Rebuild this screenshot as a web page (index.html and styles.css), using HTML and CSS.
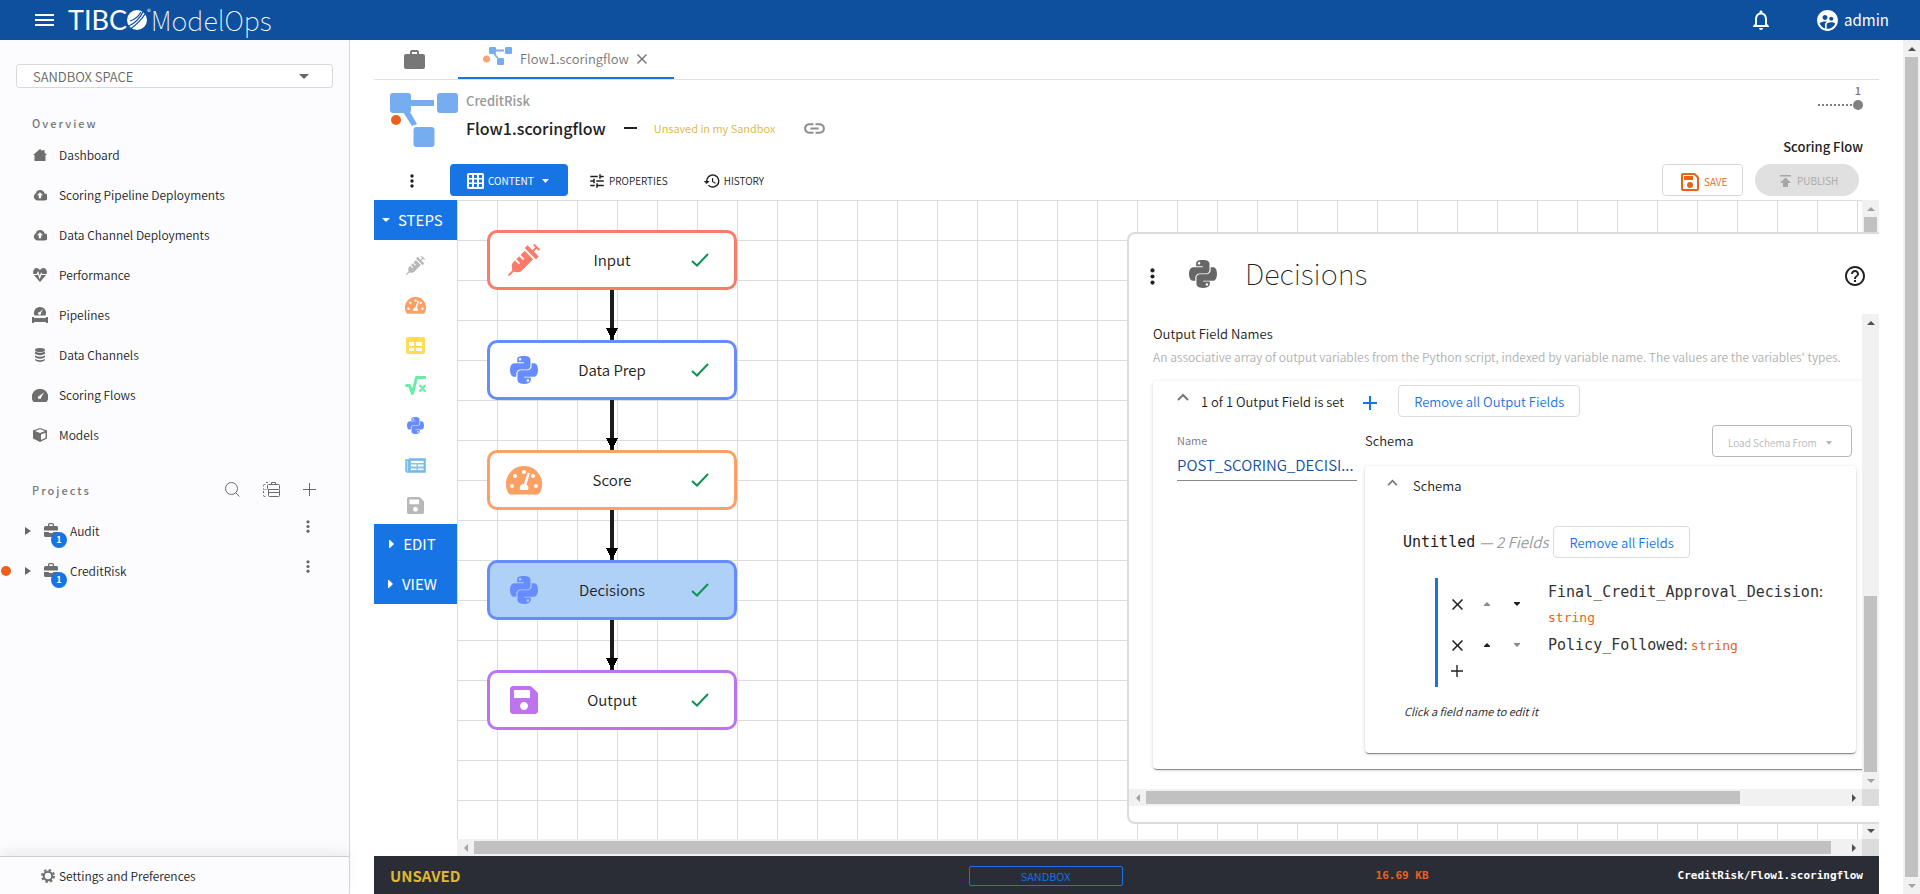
FILE: index.html
```html
<!DOCTYPE html>
<html lang="en">
<head>
<meta charset="utf-8">
<title>TIBCO ModelOps</title>
<link rel="stylesheet" href="styles.css">
</head>
<body>
<svg class="defs" aria-hidden="true">
  <symbol id="python" viewBox="0 32 448 448"><path d="M439.8 200.5c-7.7-30.9-22.3-54.2-53.4-54.2h-40.1v47.4c0 36.8-31.2 67.8-66.8 67.8H172.7c-29.2 0-53.4 25-53.4 54.3v101.8c0 29 25.2 46 53.4 54.3 33.8 9.9 66.3 11.7 106.8 0 26.9-7.8 53.4-23.5 53.4-54.3v-40.7H226.2v-13.6h160.2c31.1 0 42.6-21.7 53.4-54.2 11.2-33.5 10.7-65.7 0-108.6zM286.2 404c11.1 0 20.1 9.1 20.1 20.3 0 11.3-9 20.4-20.1 20.4-11 0-20.1-9.2-20.1-20.4.1-11.3 9.1-20.3 20.1-20.3zM167.8 248.1h106.8c29.7 0 53.4-24.5 53.4-54.3V91.9c0-29-24.4-50.7-53.4-55.6-35.8-5.9-74.7-5.6-106.8.1-45.2 8-53.4 24.7-53.4 55.6v40.7h106.9v13.6h-147c-31.1 0-58.3 18.7-66.8 54.2-9.8 40.7-10.2 66.1 0 108.6 7.6 31.6 25.7 54.2 56.8 54.2H101v-48.8c0-35.3 30.5-66.4 66.8-66.4zm-6.7-142.6c-11.1 0-20.1-9.1-20.1-20.3.1-11.3 9-20.4 20.1-20.4 11 0 20.1 9.2 20.1 20.4s-9 20.3-20.1 20.3z"/></symbol>
  <symbol id="syringe" viewBox="0 0 512 512"><path d="M201.5 174.8l55.7 55.8c3.1 3.1 3.1 8.2 0 11.3l-11.3 11.3c-3.1 3.1-8.2 3.1-11.3 0l-55.7-55.8-45.3 45.3 55.8 55.8c3.1 3.1 3.1 8.2 0 11.3l-11.3 11.3c-3.1 3.1-8.2 3.1-11.3 0L111 265.2l-26.4 26.4c-17.3 17.3-25.6 41.1-23 65.4l7.1 63.6L2.3 487c-3.1 3.1-3.1 8.2 0 11.3l11.3 11.3c3.1 3.1 8.2 3.1 11.3 0l66.3-66.3 63.6 7.1c23.9 2.6 47.9-5.4 65.4-23l181.9-181.9-135.7-135.7-64.9 65zm308.2-93.3L430.5 2.3c-3.1-3.1-8.2-3.1-11.3 0l-11.3 11.3c-3.1 3.1-3.1 8.2 0 11.3l28.3 28.3-45.3 45.3-56.6-56.6-17-17c-3.1-3.1-8.2-3.1-11.3 0l-33.9 33.9c-3.1 3.1-3.1 8.2 0 11.3l17 17L424.8 223l17 17c3.1 3.1 8.2 3.1 11.3 0l33.9-34c3.1-3.1 3.1-8.2 0-11.3l-73.5-73.5 45.3-45.3 28.3 28.3c3.1 3.1 8.2 3.1 11.3 0l11.3-11.3c3.1-3.2 3.1-8.2 0-11.4z"/></symbol>
  <symbol id="gauge" viewBox="0 0 36 29"><path d="M18 0a18 18 0 0 0-15.5 27.2A3 3 0 0 0 5 28.500h26a3 3 0 0 0 2.500-1.300A18 18 0 0 0 18 0z"/><g fill="#fff"><circle cx="18" cy="6" r="2"/><circle cx="9" cy="10" r="2"/><circle cx="27" cy="10" r="2"/><circle cx="6" cy="20" r="2"/><circle cx="30" cy="20" r="2"/><path d="M21.600 6.500l2.300.8-3.400 11.400a4 4 0 0 1 1.300 5.300h-7.600a4 4 0 0 1 3.700-6z"/></g></symbol>
  <symbol id="table" viewBox="0 0 19 17"><path fill-rule="evenodd" d="M2 0h15a2 2 0 0 1 2 2v13a2 2 0 0 1-2 2H2a2 2 0 0 1-2-2V2a2 2 0 0 1 2-2zM3 5v4h5V5zm7 0v4h6V5zM3 11v3h5v-3zm7 0v3h6v-3z"/></symbol>
  <symbol id="root" viewBox="0 0 21 19"><path d="M1.500 9.500h3l3 8 4-16H20" fill="none" stroke="currentColor" stroke-width="3" stroke-linecap="round" stroke-linejoin="round"/><path d="M15 9.500l5 5.500M20 9.500L15 15" fill="none" stroke="currentColor" stroke-width="2" stroke-linecap="round"/></symbol>
  <symbol id="news" viewBox="0 0 21 15"><path fill="none" stroke="currentColor" stroke-width="1.500" d="M4 1h16v13H2.500Q1 14 1 12.500V2h3v11"/><path d="M4 1h16v13H3z" opacity=".85"/><path d="M1 2h3v11H1z" opacity=".5"/><path fill="#fff" d="M6 3h12.500v2H6zM6 6.500h5.500v2H6zM13 6.500h5.500v2H13zM6 10.500h5.500v1.500H6zM13 10.500h5.500v1.500H13z"/></symbol>
  <symbol id="disk" viewBox="0 32 448 448"><path d="M433.941 129.941l-83.882-83.882A48 48 0 0 0 316.118 32H48C21.490 32 0 53.490 0 80v352c0 26.510 21.490 48 48 48h352c26.510 0 48-21.490 48-48V163.882a48 48 0 0 0-14.059-33.941zM224 416c-35.346 0-64-28.654-64-64 0-35.346 28.654-64 64-64s64 28.654 64 64c0 35.346-28.654 64-64 64zm96-304.520V212c0 6.627-5.373 12-12 12H76c-6.627 0-12-5.373-12-12V108c0-6.627 5.373-12 12-12h228.520c3.183 0 6.235 1.264 8.485 3.515l3.480 3.480A11.996 11.996 0 0 1 320 111.480z"/></symbol>
  <symbol id="dots" viewBox="0 0 4 14"><circle cx="2" cy="2" r="1.700"/><circle cx="2" cy="7" r="1.700"/><circle cx="2" cy="12" r="1.700"/></symbol>
  <symbol id="caret" viewBox="0 0 10 5"><path d="M0 0h10L5 5z"/></symbol>
  <symbol id="close" viewBox="5 5 14 14"><path d="M19 6.410L17.590 5 12 10.590 6.410 5 5 6.410 10.590 12 5 17.590 6.410 19 12 13.410 17.590 19 19 17.590 13.410 12z"/></symbol>
  <symbol id="check" viewBox="0 0 18 14"><path d="M1 8l5 4.500L17 1" fill="none" stroke="currentColor" stroke-width="2"/></symbol>
  <symbol id="chevron" viewBox="0 0 12 8"><path d="M1 7l5-5 5 5" fill="none" stroke="currentColor" stroke-width="2"/></symbol>
  <symbol id="plus" viewBox="0 0 14 14"><path d="M7 0v14M0 7h14" fill="none" stroke="currentColor" stroke-width="2"/></symbol>
  <symbol id="plusthin" viewBox="0 0 14 14"><path d="M7 0v14M0 7h14" fill="none" stroke="currentColor" stroke-width="1.600"/></symbol>
  <symbol id="cloud" viewBox="0 0 14 12"><path d="M11.500 4.500A4.500 4.500 0 0 0 2.800 4.200 4 4 0 0 0 3.800 11.500h7.200a3.500 3.500 0 0 0 .5-7z"/><path fill="#fff" d="M7 3.200l3 3H8.200v3H5.800v-3H4z"/></symbol>
  <symbol id="case" viewBox="0 0 14 14"><path fill-rule="evenodd" d="M4 3V1.500A1.500 1.500 0 0 1 5.500 0h3A1.500 1.500 0 0 1 10 1.500V3h2.500A1.500 1.500 0 0 1 14 4.500V7.500H0V4.500A1.500 1.500 0 0 1 1.500 3zm1.300 0h3.400V1.300H5.300zM0 9h5v1h4V9h5v3.500A1.500 1.500 0 0 1 12.500 14h-11A1.500 1.500 0 0 1 0 12.500z"/></symbol>
</svg>

<header class="topbar">
  <button class="icon-btn" aria-label="Menu"><svg width="19" height="12" viewBox="0 0 19 12"><path d="M0 1h19M0 6h19M0 11h19" stroke="#fff" stroke-width="2"/></svg></button>
  <a class="brand" href="#"><span class="brand-name">TIBC</span><svg width="20" height="20" viewBox="0 0 20 20"><circle cx="10" cy="10" r="10" fill="#fff"/><path d="M1 16.500Q11 12 16 2M4 18.500Q13 12 18 4M3 11Q10 9 14 2" fill="none" stroke="#0f509e" stroke-width="1.300"/></svg><span class="reg">®</span><span class="product">ModelOps</span></a>
  <div class="topbar-right">
    <button class="icon-btn" aria-label="Notifications"><svg width="24" height="24" viewBox="0 0 24 24"><path d="M12 22c1.100 0 2-.9 2-2h-4c0 1.100.9 2 2 2zm6-6v-5c0-3.070-1.630-5.640-4.500-6.320V4c0-.83-.67-1.500-1.500-1.500s-1.500.67-1.500 1.500v.68C7.640 5.360 6 7.920 6 11v5l-2 2v1h16v-1l-2-2zm-2 1H8v-6c0-2.480 1.510-4.500 4-4.500s4 2.020 4 4.500v6z"/></svg></button>
    <button class="user"><svg width="25" height="25" viewBox="0 0 24 24"><path d="M11.990 2c-5.520 0-10 4.480-10 10s4.480 10 10 10 10-4.480 10-10-4.480-10-10-10zm3.610 6.340c1.070 0 1.930.86 1.930 1.930 0 1.070-.86 1.930-1.930 1.930-1.070 0-1.930-.86-1.930-1.930-.01-1.070.86-1.930 1.930-1.930zm-6-1.580c1.300 0 2.360 1.060 2.360 2.360 0 1.300-1.060 2.360-2.360 2.360s-2.360-1.060-2.360-2.360c0-1.310 1.050-2.360 2.360-2.360zm0 9.130v3.750c-2.400-.75-4.300-2.600-5.140-4.960 1.050-1.120 3.670-1.690 5.140-1.690.53 0 1.200.08 1.900.22-1.640.87-1.900 2.020-1.900 2.680zM11.990 20c-.27 0-.53-.01-.79-.04v-4.070c0-1.420 2.940-2.130 4.400-2.130 1.070 0 2.920.39 3.840 1.150-1.170 2.970-4.060 5.090-7.450 5.090z"/></svg>admin</button>
  </div>
</header>

<div class="shell">
  <aside class="sidebar">
    <div class="side-scroll">
      <div class="space-pick"><select aria-label="Space"><option>SANDBOX SPACE</option></select><svg width="10" height="5"><use href="#caret"/></svg></div>
      <h2 class="side-title">Overview</h2>
      <nav class="nav">
        <a href="#"><span class="ico"><svg width="14" height="12" viewBox="0 0 14 12"><path d="M7 0l2.500 2V1h2v2.500L14 6h-1.500v6h-11V6H0z"/></svg></span>Dashboard</a>
        <a href="#"><span class="ico"><svg width="14" height="12"><use href="#cloud"/></svg></span>Scoring Pipeline Deployments</a>
        <a href="#"><span class="ico"><svg width="14" height="12"><use href="#cloud"/></svg></span>Data Channel Deployments</a>
        <a href="#"><span class="ico"><svg width="14" height="14" viewBox="0 0 14 14"><path d="M7 2Q3.500-1.500 1 1.500-.6 3.500.5 6.500L7 14l6.500-7.500q1.100-3-.5-5Q10.500-1.500 7 2z"/><path d="M0 6.500h4l1-2 1.700 5 1.600-4 .7 1h5" fill="none" stroke="#fff" stroke-width="1.200"/></svg></span>Performance</a>
        <a href="#"><span class="ico"><svg width="16" height="16" viewBox="0 0 16 16"><path d="M8 0a6 6 0 0 0-5.500 8.500h11A6 6 0 0 0 8 0zM0 10h2v1h12v-1h2v6h-2v-1H2v1H0z"/><path d="M7 6l4-4-2.500 5z" fill="#fff"/><circle cx="7.500" cy="6.500" r="1.400" fill="#fff"/></svg></span>Pipelines</a>
        <a href="#"><span class="ico"><svg width="10" height="14" viewBox="0 0 10 14"><ellipse cx="5" cy="2" rx="5" ry="2"/><path d="M0 3.500q5 2.500 10 0v2.200q-5 3-10 0zM0 7.500q5 2.500 10 0v1.700q-5 3-10 0zM0 11q5 2.500 10 0v1.200q-5 3.600-10 0z"/></svg></span>Data Channels</a>
        <a href="#"><span class="ico"><svg width="16" height="13" viewBox="0 0 16 13"><path d="M8 0A8 8 0 0 0 1.500 13h13A8 8 0 0 0 8 0z"/><path d="M6.500 7.500L12 3.500l-3.500 6z" fill="#fff"/><circle cx="7.500" cy="8.500" r="1.600" fill="#fff"/></svg></span>Scoring Flows</a>
        <a href="#"><span class="ico"><svg width="14" height="14" viewBox="0 0 14 14"><path d="M7 0l7 2.500v8L7 14l-7-3.500v-8z"/><path d="M2 3l5 2 5-2-5-1.800zM8 6.500l4.500-1.800V9.700L8 12z" fill="#fff"/></svg></span>Models</a>
      </nav>
      <div class="projects-head">
        <h2 class="side-title">Projects</h2>
        <button class="icon-btn" aria-label="Search"><svg width="15" height="15" viewBox="0 0 15 15" fill="none" stroke="#6b6b6b"><circle cx="6.500" cy="6.500" r="6"/><path d="M10.700 10.700L14.500 14.500"/></svg></button>
        <button class="icon-btn" aria-label="Archived projects"><svg width="17" height="15" viewBox="0 0 17 15" fill="none" stroke="#6b6b6b"><rect x="4.500" y="2.500" width="12" height="5" rx="1"/><path d="M8.500 2.500v-2h4v2M5.500 7.500v6q0 1 1 1h9q1 0 1-1v-6M5.500 10.500h11M2.500 2.500h-1q-1 0-1 1v1m0 2v1h1m1 0h1M.5 9v2m0 2v.5q0 1 1 1h1m.5-14h2"/></svg></button>
        <button class="icon-btn" aria-label="Add project"><svg width="13" height="13" viewBox="0 0 13 13"><path d="M6.500 0v13M0 6.500h13" stroke="#6b6b6b"/></svg></button>
      </div>
      <div class="project"><i class="mark"></i><svg class="tri" width="6" height="8" viewBox="0 0 6 8"><path d="M0 0l6 4-6 4z"/></svg><span class="proj-ico"><svg width="14" height="14"><use href="#case"/></svg><b class="badge">1</b></span><a href="#">Audit</a><button class="icon-btn" aria-label="Audit menu"><svg width="4" height="13"><use href="#dots"/></svg></button></div>
      <div class="project"><i class="mark on"></i><svg class="tri" width="6" height="8" viewBox="0 0 6 8"><path d="M0 0l6 4-6 4z"/></svg><span class="proj-ico"><svg width="14" height="14"><use href="#case"/></svg><b class="badge">1</b></span><a href="#">CreditRisk</a><button class="icon-btn" aria-label="CreditRisk menu"><svg width="4" height="13"><use href="#dots"/></svg></button></div>
    </div>
    <a class="settings" href="#"><svg width="14" height="14" viewBox="0 0 14 14"><circle cx="7" cy="7" r="4.200" fill="none" stroke="#6e6e6e" stroke-width="2"/><circle cx="7" cy="7" r="6" fill="none" stroke="#6e6e6e" stroke-width="2" stroke-dasharray="2.400 2.310"/></svg>Settings and Preferences</a>
  </aside>

  <main class="main">
    <div class="tabs">
      <button class="tab home" aria-label="Projects"><svg width="21" height="19" viewBox="0 0 21 19"><path fill-rule="evenodd" d="M6 4V2a2 2 0 0 1 2-2h5a2 2 0 0 1 2 2v2h4a2 2 0 0 1 2 2v11a2 2 0 0 1-2 2H2a2 2 0 0 1-2-2V6a2 2 0 0 1 2-2zm2 0h5V2H8z"/></svg></button>
      <div class="tab file">
        <svg width="29" height="18" viewBox="0 0 29 18" fill="#76acf0"><rect x="6" width="7" height="7" rx="1"/><rect x="22" width="7" height="7" rx="1"/><rect x="14" y="11" width="7" height="7" rx="1"/><path d="M13 2.500h8v2h-8zM10.500 7h2l3 4h-2z"/><circle cx="3.500" cy="12" r="3.500" fill="#f5a47c"/></svg>
        <span>Flow1.scoringflow</span>
        <button class="icon-btn" aria-label="Close tab"><svg width="10" height="10" fill="#777"><use href="#close"/></svg></button>
      </div>
    </div>

    <section class="doc-head">
      <svg class="doc-logo" width="68" height="54" viewBox="0 0 68 54" fill="#76acf0"><rect width="21" height="20" rx="3"/><rect x="47" width="21" height="20" rx="3"/><rect x="23.500" y="34" width="21" height="20" rx="3"/><path d="M20 7h24v6H20zM13 19h7l7 12-5 2z"/><circle cx="6" cy="27" r="5" fill="#ed5f1d"/></svg>
      <div class="doc-titles">
        <div class="doc-project">CreditRisk</div>
        <div class="doc-line"><h1>Flow1.scoringflow</h1><i class="dash"></i><span class="unsaved">Unsaved in my Sandbox</span><svg width="25" height="25" viewBox="0 0 24 24" fill="#8f8f8f"><path d="M3.900 12c0-1.710 1.390-3.100 3.100-3.100h4V7H7c-2.760 0-5 2.240-5 5s2.240 5 5 5h4v-1.900H7c-1.710 0-3.100-1.390-3.100-3.100zM8 13h8v-2H8v2zm9-6h-4v1.900h4c1.710 0 3.100 1.390 3.100 3.100s-1.390 3.100-3.100 3.100h-4V17h4c2.760 0 5-2.240 5-5s-2.240-5-5-5z"/></svg></div>
      </div>
      <div class="doc-side">
        <div class="revision"><span>1</span><svg width="45" height="10" viewBox="0 0 45 10"><path d="M0 5h35" stroke="#808080" stroke-width="2" stroke-dasharray="2 2"/><circle cx="40" cy="5" r="5" fill="#808080"/></svg></div>
        <strong>Scoring Flow</strong>
      </div>
    </section>

    <div class="toolbar">
      <button class="icon-btn more" aria-label="More"><svg width="4" height="14"><use href="#dots"/></svg></button>
      <button class="btn primary"><svg width="17" height="16" viewBox="0 0 17 16"><path fill-rule="evenodd" d="M1.500 0h14A1.500 1.500 0 0 1 17 1.500v13a1.500 1.500 0 0 1-1.500 1.500h-14A1.500 1.500 0 0 1 0 14.500v-13A1.500 1.500 0 0 1 1.500 0zM2 2v3h3V2zm5 0v3h3V2zm5 0v3h3V2zM2 6.500v3h3v-3zm5 0v3h3v-3zm5 0v3h3v-3zM2 11v3h3v-3zm5 0v3h3v-3zm5 0v3h3v-3z"/></svg>CONTENT<svg class="gap" width="7" height="4" viewBox="0 0 10 5" preserveAspectRatio="none"><path d="M0 0h10L5 5z"/></svg></button>
      <button class="btn flat"><svg width="18" height="18" viewBox="0 0 24 24"><path d="M3 17v2h6v-2H3zM3 5v2h10V5H3zm10 16v-2h8v-2h-8v-2h-2v6h2zM7 9v2H3v2h4v2h2V9H7zm14 4v-2H11v2h10zm-6-4h2V7h4V5h-4V3h-2v6z"/></svg>PROPERTIES</button>
      <button class="btn flat"><svg width="18" height="18" viewBox="0 0 24 24"><path d="M13 3a9 9 0 0 0-9 9H1l3.890 3.890.07.14L9 12H6c0-3.870 3.130-7 7-7s7 3.130 7 7-3.130 7-7 7c-1.930 0-3.680-.79-4.940-2.060l-1.420 1.420A8.954 8.954 0 0 0 13 21a9 9 0 0 0 0-18zm-1 5v5l4.280 2.540.72-1.210-3.500-2.080V8H12z"/></svg>HISTORY</button>
      <div class="toolbar-end">
        <button class="btn save"><svg width="18" height="18" viewBox="0 0 18 18"><path fill="none" stroke="currentColor" stroke-width="2" d="M2 1h11.500L17 4.500V16q0 1-1 1H2q-1 0-1-1V2q0-1 1-1z"/><path d="M3 3h9v4H3z"/><circle cx="9" cy="12" r="3"/></svg>SAVE</button>
        <button class="btn publish" disabled><svg width="11" height="12" viewBox="0 0 11 12"><path d="M0 0h11v1.500H0zM5.500 2.500L11 8H8v4H3V8H0z"/></svg>PUBLISH</button>
      </div>
    </div>

    <div class="work">
      <div class="palette">
        <button class="group open"><svg width="8" height="4" viewBox="0 0 10 5" preserveAspectRatio="none"><path d="M0 0h10L5 5z"/></svg>STEPS</button>
        <div class="tools">
          <button class="tool t-grey" aria-label="Input"><svg width="19" height="19"><use href="#syringe"/></svg></button>
          <button class="tool t-orange" aria-label="Score"><svg width="21" height="17"><use href="#gauge"/></svg></button>
          <button class="tool t-yellow" aria-label="Table"><svg width="19" height="17"><use href="#table"/></svg></button>
          <button class="tool t-green" aria-label="Formula"><svg width="21" height="19"><use href="#root"/></svg></button>
          <button class="tool t-blue" aria-label="Python"><svg width="17" height="17"><use href="#python"/></svg></button>
          <button class="tool t-sky" aria-label="Report"><svg width="21" height="15"><use href="#news"/></svg></button>
          <button class="tool t-grey" aria-label="Output"><svg width="17" height="17"><use href="#disk"/></svg></button>
        </div>
        <button class="group"><svg width="5" height="8" viewBox="0 0 5 8"><path d="M0 0h1l4 4-4 4H0z"/></svg>EDIT</button>
        <button class="group"><svg width="5" height="8" viewBox="0 0 5 8"><path d="M0 0h1l4 4-4 4H0z"/></svg>VIEW</button>
      </div>

      <div class="canvas-frame">
        <div class="canvas">
          <div class="node n-red"><svg width="32" height="32"><use href="#syringe"/></svg><span>Input</span><svg class="ok" width="18" height="14"><use href="#check"/></svg></div>
          <div class="link"></div>
          <div class="node n-blue"><svg width="28" height="28"><use href="#python"/></svg><span>Data Prep</span><svg class="ok" width="18" height="14"><use href="#check"/></svg></div>
          <div class="link"></div>
          <div class="node n-orange"><svg width="36" height="29"><use href="#gauge"/></svg><span>Score</span><svg class="ok" width="18" height="14"><use href="#check"/></svg></div>
          <div class="link"></div>
          <div class="node n-blue selected"><svg width="28" height="28"><use href="#python"/></svg><span>Decisions</span><svg class="ok" width="18" height="14"><use href="#check"/></svg></div>
          <div class="link"></div>
          <div class="node n-purple"><svg width="28" height="28"><use href="#disk"/></svg><span>Output</span><svg class="ok" width="18" height="14"><use href="#check"/></svg></div>
        </div>
        <div class="sb v"><i class="a up dim"></i><div class="track"><i class="thumb w99"></i></div><i class="a down"></i></div>
        <div class="sb h"><i class="a left dim"></i><div class="track"><i class="thumb w99"></i></div><i class="a right"></i></div>
        <div class="corner"></div>

        <section class="panel">
          <header class="panel-head">
            <button class="icon-btn" aria-label="Step menu"><svg width="5" height="17"><use href="#dots"/></svg></button>
            <svg width="28" height="28" fill="#666"><use href="#python"/></svg>
            <h2>Decisions</h2>
            <button class="icon-btn help" aria-label="Help"><svg width="24" height="24" viewBox="0 0 24 24"><path d="M11 18h2v-2h-2v2zm1-16C6.480 2 2 6.480 2 12s4.480 10 10 10 10-4.480 10-10S17.520 2 12 2zm0 18c-4.410 0-8-3.590-8-8s3.590-8 8-8 8 3.590 8 8-3.590 8-8 8zm0-14c-2.210 0-4 1.790-4 4h2c0-1.100.9-2 2-2s2 .9 2 2c0 2-3 1.750-3 5h2c0-2.250 3-2.500 3-5 0-2.210-1.790-4-4-4z"/></svg></button>
          </header>
          <div class="panel-frame">
            <div class="panel-body">
              <h3>Output Field Names</h3>
              <p class="hint">An associative array of output variables from the Python script, indexed by variable name. The values are the variables' types.</p>
              <div class="card outer">
                <div class="card-top"><button class="icon-btn chev" aria-label="Collapse"><svg width="12" height="8"><use href="#chevron"/></svg></button><span>1 of 1 Output Field is set</span><button class="icon-btn add" aria-label="Add output field"><svg width="14" height="14"><use href="#plus"/></svg></button><button class="outline">Remove all Output Fields</button></div>
                <div class="fields">
                  <div class="name-field"><label for="fname">Name</label><input id="fname" value="POST_SCORING_DECISI..."></div>
                  <div class="schema">
                    <div class="schema-top"><span>Schema</span><button class="load" disabled>Load Schema From<svg width="6" height="4" viewBox="0 0 10 5" preserveAspectRatio="none"><path d="M0 0h10L5 5z"/></svg></button></div>
                    <div class="card inner">
                      <div class="inner-top"><button class="icon-btn chev" aria-label="Collapse schema"><svg width="11" height="7"><use href="#chevron"/></svg></button><span>Schema</span></div>
                      <div class="untitled"><code>Untitled</code><em>— 2 Fields</em><button class="outline">Remove all Fields</button></div>
                      <div class="rows">
                        <div class="row tall"><button class="icon-btn" aria-label="Remove"><svg width="11" height="11"><use href="#close"/></svg></button><button class="icon-btn off" aria-label="Move up"><svg width="6" height="4" viewBox="0 0 6 4"><path d="M3 0l3 3v1H0V3z"/></svg></button><button class="icon-btn" aria-label="Move down"><svg width="6" height="4" viewBox="0 0 6 4"><path d="M3 4l3-3V0H0v1z"/></svg></button><div class="def"><code>Final_Credit_Approval_Decision</code>: <code class="type">string</code></div></div>
                        <div class="row"><button class="icon-btn" aria-label="Remove"><svg width="11" height="11"><use href="#close"/></svg></button><button class="icon-btn" aria-label="Move up"><svg width="6" height="4" viewBox="0 0 6 4"><path d="M3 0l3 3v1H0V3z"/></svg></button><button class="icon-btn off" aria-label="Move down"><svg width="6" height="4" viewBox="0 0 6 4"><path d="M3 4l3-3V0H0v1z"/></svg></button><div class="def"><code>Policy_Followed</code>: <code class="type">string</code></div></div>
                        <div class="row last"><button class="icon-btn" aria-label="Add field"><svg width="12" height="12"><use href="#plusthin"/></svg></button></div>
                      </div>
                      <p class="note">Click a field name to edit it</p>
                    </div>
                  </div>
                </div>
              </div>
            </div>
            <div class="sb v"><i class="a up"></i><div class="track end"><i class="thumb w40"></i></div><i class="a down dim"></i></div>
            <div class="sb h"><i class="a left dim"></i><div class="track"><i class="thumb w85"></i></div><i class="a right"></i></div>
            <div class="corner"></div>
          </div>
        </section>
      </div>
    </div>

    <footer class="status">
      <b class="state">UNSAVED</b>
      <button class="env">SANDBOX</button>
      <code class="size">16.69 KB</code>
      <code class="path">CreditRisk/Flow1.scoringflow</code>
    </footer>
  </main>
  <div class="sb v page"><i class="a up"></i><div class="track"><i class="thumb full"></i></div><i class="a down dim"></i></div>
</div>
</body>
</html>
```
FILE: styles.css
```css
:root {
  --sans: "Noto Sans CJK SC", "Noto Sans", sans-serif;
  --mono: "DejaVu Sans Mono", monospace;
  --blue: #1774e5;
  --ink: #212121;
  --grey: #6e6e6e;
  --line: #dcdcdc;
}
* { box-sizing: border-box; }
body {
  margin: 0;
  height: 100vh;
  overflow: hidden;
  display: flex;
  flex-direction: column;
  background: #fff;
  color: var(--ink);
  font: 350 13px/20px var(--sans);
}
button, input, select { font: inherit; color: inherit; margin: 0; }
button { border: 0; background: none; padding: 0; cursor: pointer; }
a { color: inherit; text-decoration: none; }
h1, h2, h3, p { margin: 0; font-weight: 400; }
h3 { font-size: 13px; font-weight: 350; }
code { font-family: var(--mono); font-size: 15px; }
svg { display: block; flex: none; }
svg:not([fill]) { fill: currentColor; }
.defs { position: absolute; width: 0; height: 0; }
.icon-btn { display: flex; align-items: center; justify-content: center; }

/* top bar */
.topbar {
  flex: none;
  height: 40px;
  display: flex;
  align-items: center;
  padding: 0 31px 0 35px;
  background: #0f509e;
  color: #fff;
}
.brand { display: flex; align-items: center; margin-left: 14px; line-height: 40px; }
.brand-name { font-family: Lato, sans-serif; font-size: 27px; font-weight: 400; }
.brand .reg { align-self: flex-start; font-size: 8px; line-height: 24px; }
.brand .product { font-size: 27px; font-weight: 100; line-height: 36px; }
.topbar-right { margin-left: auto; display: flex; align-items: center; gap: 42px; }
.user { display: flex; align-items: center; gap: 4px; font-size: 15px; font-weight: 400; }

/* shell */
.shell { flex: 1; min-height: 0; display: flex; }
.sidebar {
  width: 350px;
  flex: none;
  display: flex;
  flex-direction: column;
  background: #fcfcff;
  border-right: 1px solid #d8d8d8;
  font-size: 12px;
}
.side-scroll { flex: 1; padding-top: 24px; color: #222; }
.space-pick { display: grid; align-items: center; margin: 0 16px; }
.space-pick > * { grid-area: 1 / 1; }
.space-pick svg { justify-self: end; margin-right: 24px; color: #666; pointer-events: none; }
.space-pick select {
  appearance: none;
  width: 100%;
  height: 24px;
  padding: 2px 16px 0;
  border: 1px solid #d8d8d8;
  border-radius: 3px;
  background: #fff;
  color: #666;
  font-size: 13px;
  line-height: 20px;
}
.side-title { font-size: 11px; font-weight: 500; line-height: 16px; letter-spacing: 2px; color: #777; padding-left: 32px; }
.space-pick + .side-title { margin-top: 27px; }
.nav { margin-top: 4px; }
.nav a { display: flex; align-items: center; height: 40px; padding-left: 30px; gap: 9px; }
.ico { width: 20px; display: flex; justify-content: center; color: var(--grey); }
.projects-head { display: flex; align-items: center; height: 20px; margin: 24px 33px 12px 0; gap: 23px; }
.projects-head .side-title { flex: 1; padding-top: 2px; }
.project { display: flex; align-items: center; height: 40px; padding-right: 39px; }
.project .icon-btn { margin-left: auto; margin-bottom: 10px; color: #666; }
.mark { width: 10px; height: 10px; margin: 0 14px 0 1px; border-radius: 50%; }
.mark.on { background: #ed5f1d; }
.tri { color: #666; }
.proj-ico { position: relative; margin: 0 12px 3px 13px; color: var(--grey); }
.badge {
  position: absolute;
  left: 7px;
  top: 9px;
  width: 16px;
  height: 16px;
  border-radius: 50%;
  background: var(--blue);
  color: #fff;
  font-size: 9px;
  line-height: 16px;
  text-align: center;
}
.settings {
  display: flex;
  align-items: center;
  gap: 4px;
  height: 38px;
  padding-left: 41px;
  border-top: 1px solid #ccc;
  box-shadow: 0 -6px 12px rgba(0, 0, 0, .06);
}

/* main column */
.main { flex: 1; min-width: 0; display: flex; flex-direction: column; padding: 0 24px; }
.tabs { flex: none; display: flex; height: 40px; border-bottom: 1px solid #e0e0e0; }
.tab { display: flex; align-items: center; }
.home { width: 84px; padding-left: 30px; color: #777; }
.file { width: 216px; padding-left: 25px; border-bottom: 2px solid var(--blue); color: #777; gap: 8px; font-size: 13px; }
.file > svg { margin-bottom: 6px; }

.doc-head { flex: none; display: flex; height: 84px; padding: 4px 16px 0; }
.doc-logo { margin-top: 9px; }
.doc-titles { margin-left: 8px; padding-top: 7px; }
.doc-project { font-size: 13px; font-weight: 500; color: #999; }
.doc-line { display: flex; align-items: center; height: 34px; }
.doc-line h1 { font-size: 16px; font-weight: 500; }
.dash { width: 13px; height: 2px; margin: 0 17px 0 18px; background: var(--ink); }
.unsaved { font-size: 11px; color: #e0b440; margin-right: 27px; }
.doc-side { margin-left: auto; display: flex; flex-direction: column; align-items: flex-end; justify-content: space-between; padding-bottom: 7px; }
.doc-side strong { font-size: 13px; font-weight: 500; }
.revision { display: flex; flex-direction: column; align-items: flex-end; gap: 4px; font-size: 11px; font-weight: 500; line-height: 12px; color: #777; }
.revision span { padding-right: 2px; }

.toolbar { flex: none; display: flex; height: 36px; align-items: flex-start; font-size: 10px; padding-right: 20px; }
.more { width: 76px; height: 34px; }
.btn { display: flex; align-items: center; height: 32px; gap: 4px; padding-top: 2px; font-weight: 350; }
.primary { width: 118px; padding-left: 17px; background: var(--blue); color: #fff; border-radius: 4px; font-weight: 400; }
.primary .gap { margin-left: 4px; }
.flat { margin-left: 20px; gap: 3px; }
.flat + .flat { margin-left: 35px; }
.toolbar-end { display: flex; gap: 12px; margin-left: auto; }
.save { width: 81px; padding: 3px 0 0 18px; border: 1px solid #d8d8d8; border-radius: 4px; color: #ed5f1d; gap: 5px; }
.publish { width: 104px; border-radius: 16px; padding-left: 25px; background: #e0e0e0; color: #a6a6a6; gap: 6px; }

/* work area */
.work { flex: 1; min-height: 0; display: flex; }
.palette { width: 83px; flex: none; }
.group {
  display: flex;
  align-items: center;
  justify-content: center;
  gap: 9px;
  width: 100%;
  height: 40px;
  padding-right: 6px;
  background: var(--blue);
  color: #fff;
  font-size: 15px;
  font-weight: 400;
}
.group.open { gap: 8px; justify-content: flex-start; padding-left: 8px; }
.tools { padding: 5px 0 0; height: 284px; }
.tool { width: 100%; height: 40px; display: flex; align-items: center; justify-content: center; }
.t-grey { color: #b8b8b8; }
.t-orange { color: #fca065; }
.t-yellow { color: #ffdd57; }
.t-green { color: #69eda5; }
.t-blue { color: #668cff; }
.t-sky { color: #6db9ec; }

.canvas-frame, .panel-frame { display: grid; grid-template: minmax(0, 1fr) 17px / minmax(0, 1fr) 17px; }
.canvas-frame { position: relative; flex: 1; min-width: 0; }
.canvas {
  padding: 30px;
  overflow: hidden;
  background-image: linear-gradient(var(--line) 1px, transparent 1px), linear-gradient(90deg, var(--line) 1px, transparent 1px);
  background-size: 40px 40px;
}
.node {
  display: grid;
  grid-template-columns: 68px 1fr 68px;
  align-items: center;
  justify-items: center;
  width: 250px;
  height: 60px;
  border: 3px solid currentColor;
  border-radius: 10px;
  background: #fff;
}
.node span { color: var(--ink); font-size: 15px; }
.node .ok { color: #0d9455; }
.n-red { color: #fc7a68; }
.n-blue { color: #668cff; }
.n-orange { color: #fca065; }
.n-purple { color: #bd74ee; }
.node.selected { background: #afd0f7; }
.link {
  width: 250px;
  height: 50px;
  background:
    conic-gradient(from 333deg at 50% 100%, #000 54deg, transparent 54deg) center bottom / 14px 12px no-repeat,
    linear-gradient(#1c1c1c, #1c1c1c) center top / 4px 50px no-repeat;
}

/* scroll bars */
.sb { display: flex; background: #f1f1f1; }
.sb.v { flex-direction: column; width: 17px; }
.sb.h { height: 17px; }
.sb .track { flex: 1; display: flex; min-width: 0; min-height: 0; }
.v .track { flex-direction: column; padding: 0 2px; }
.h .track { padding: 2px 0; }
.track.end { justify-content: flex-end; }
.thumb { background: #c1c1c1; }
.h .w99 { width: 99%; }
.h .w85 { width: 85%; }
.v .w99 { height: 99%; }
.v .w40 { height: 40%; }
.v .full { height: 100%; }
.sb .a { width: 17px; height: 17px; display: grid; place-items: center; color: #505050; }
.sb .a.dim { color: #a3a3a3; }
.a::before { content: ""; border: 4px solid transparent; }
.a.up::before { border-top: 0; border-bottom-color: currentColor; }
.a.down::before { border-bottom: 0; border-top-color: currentColor; }
.a.left::before { border-left: 0; border-right-color: currentColor; }
.a.right::before { border-right: 0; border-left-color: currentColor; }
.corner { background: #dcdcdc; }
.page { flex: none; }

/* details panel, floating over the canvas */
.panel {
  position: absolute;
  top: 32px;
  bottom: 32px;
  right: 0;
  width: 53%;
  max-width: 752px;
  display: flex;
  flex-direction: column;
  padding-bottom: 16px;
  background: #fff;
  border: 2px solid var(--line);
  border-right: 0;
  border-radius: 8px 0 0 8px;
}
.panel-head { flex: none; display: flex; align-items: center; height: 80px; padding: 4px 12px 0 21px; }
.panel-head > svg { margin: 0 28px 4px 34px; }
.panel-head h2 { font-size: 29px; font-weight: 100; line-height: 36px; padding-bottom: 8px; }
.help { margin-left: auto; }
.panel-frame { flex: 1; min-height: 0; }
.panel-body { overflow: hidden; padding: 10px 0 0 24px; }
.hint { margin-top: 3px; font-size: 12px; font-weight: 350; color: #b0b0b0; white-space: nowrap; }
.card { border-radius: 4px; background: #fff; box-shadow: 0 2px 1px -1px rgba(0, 0, 0, .3), 0 1px 1px rgba(0, 0, 0, .2), 0 1px 4px rgba(0, 0, 0, .14); }
.outer { margin: 14px -20px 0 0; padding: 4px 26px 16px 24px; }
.card-top { display: flex; align-items: center; height: 32px; }
.card-top > span { margin: 1px 19px 0 12px; }
.chev { color: #777; }
.card-top .chev { margin-bottom: 8px; }
.add { color: var(--blue); margin: 4px 21px 0 0; }
.outline { height: 32px; padding: 2px 15px 0; border: 1px solid #dcdcdc; border-radius: 4px; background: #fff; color: var(--blue); white-space: nowrap; }
.fields { display: flex; align-items: flex-start; gap: 8px; padding-top: 8px; }
.name-field { width: 180px; flex: none; padding-top: 7px; display: flex; flex-direction: column; }
.name-field label { font-size: 11px; line-height: 16px; color: #777; }
.name-field input {
  width: 100%;
  height: 33px;
  padding: 0;
  border: 0;
  border-bottom: 1px solid #8a8a8a;
  background: none;
  color: #0f509e;
  font-size: 15px;
  text-overflow: ellipsis;
}
.schema { flex: 1; min-width: 0; }
.schema-top { display: flex; align-items: center; justify-content: space-between; height: 32px; padding-right: 4px; }
.load { display: flex; align-items: center; gap: 9px; width: 140px; height: 32px; padding: 4px 0 0 15px; border: 1px solid #b8b8b8; border-radius: 4px; color: #b8b8b8; font-size: 10px; white-space: nowrap; }
.inner { margin-top: 9px; height: 287px; padding: 10px 16px 0 22px; }
.inner-top { display: flex; align-items: center; gap: 15px; height: 20px; }
.inner-top .chev { margin-bottom: 8px; }
.untitled { display: flex; align-items: center; margin: 30px 0 20px 16px; font-size: 15px; }
.untitled em { margin: 0 5px 0 4px; color: #999; }
.untitled .outline { font-size: 13px; }
.rows { margin-left: 48px; border-left: 3px solid var(--blue); height: 109px; display: flex; flex-direction: column; }
.row { display: flex; align-items: center; height: 30px; padding-left: 4px; font-size: 15px; }
.row.tall { height: 52px; }
.row.last { height: 22px; }
.row .icon-btn { width: 30px; flex: none; color: var(--ink); }
.row .icon-btn.off { color: #8a8a8a; }
.def { margin-left: 16px; line-height: 24px; color: #333; }
code.type { color: #ed5f1d; font-size: 13px; }
.note { margin: 14px 0 0 17px; font-size: 11px; font-weight: 350; font-style: italic; }

/* status bar */
.status { flex: none; display: flex; align-items: center; height: 38px; padding: 2px 16px 0; background: #2b2d36; color: #fff; }
.state { flex: 21; font-size: 15px; font-weight: 700; color: #deb92f; }
.env { width: 154px; height: 20px; border: 1px solid var(--blue); border-radius: 2px; color: var(--blue); font-size: 11px; line-height: 16px; }
.status code { font-size: 11px; font-weight: 700; }
.size { flex: 20; padding-left: 4px; text-align: center; color: #ed5f1d; }
```
